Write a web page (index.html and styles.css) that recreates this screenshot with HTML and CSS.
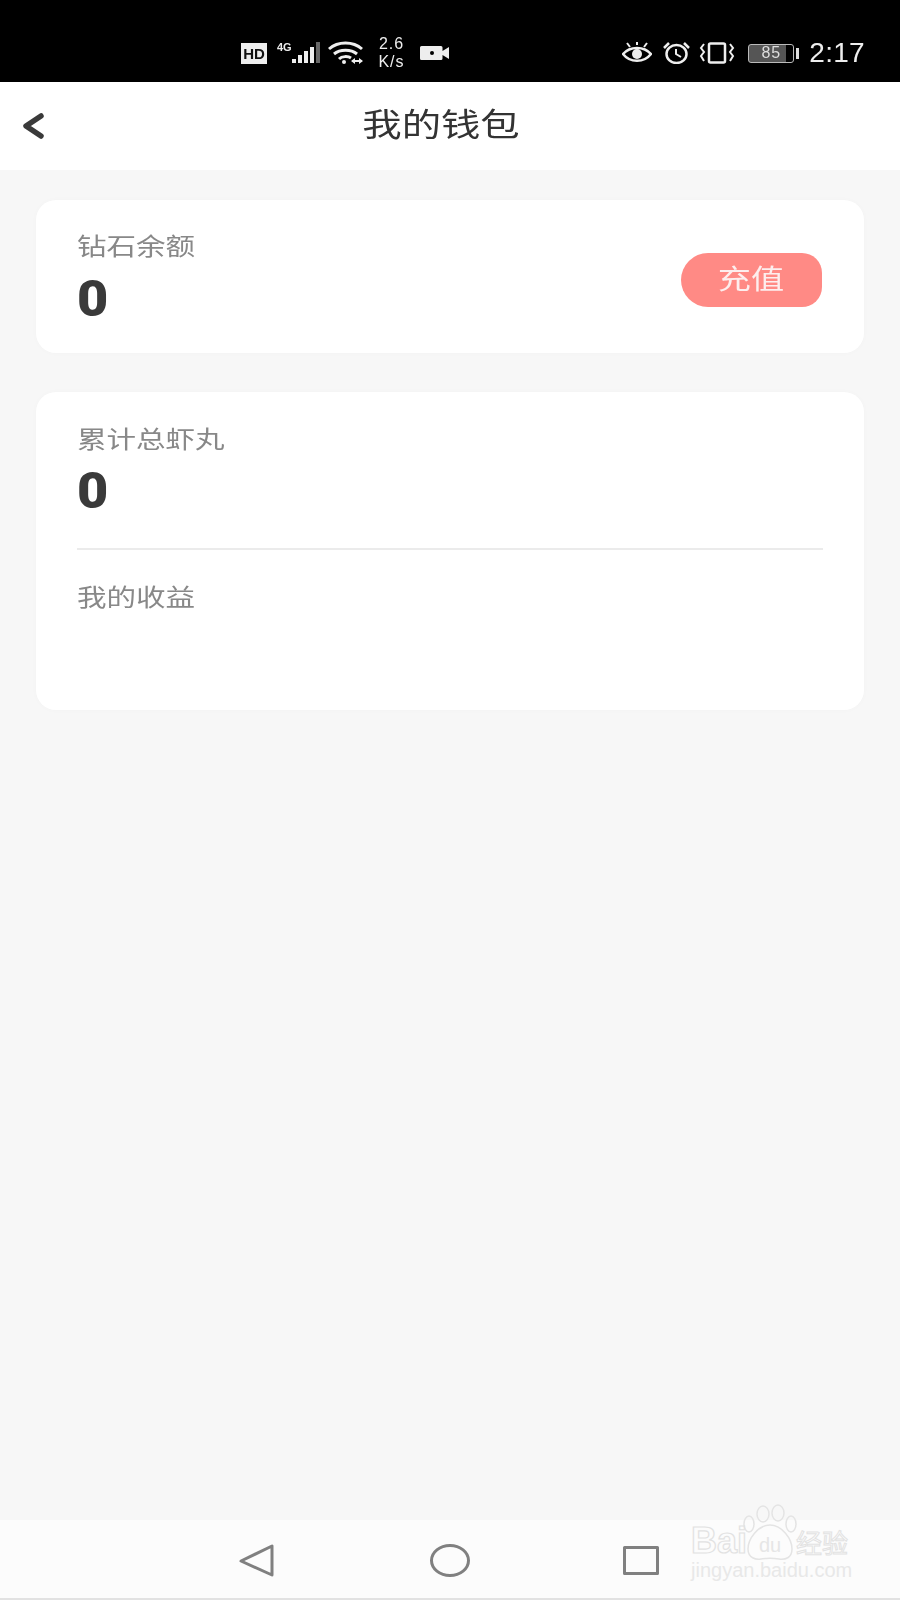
FILE: index.html
```html
<!DOCTYPE html>
<html lang="zh-CN">
<head>
    <meta charset="UTF-8">
    <meta name="viewport" content="width=device-width, initial-scale=1.0">
    <title>我的钱包</title>
    <link rel="stylesheet" href="styles.css">
</head>
<body>
    <div class="status-bar">
        <div class="status-group status-left">
            <span class="hd-badge">HD</span>
            <svg class="icon-signal" width="45" height="22" viewBox="0 0 45 22">
                <text x="0" y="9" class="net-label">4G</text>
                <rect x="15" y="17" width="4" height="4" fill="#eee"/>
                <rect x="21" y="13" width="4" height="8" fill="#eee"/>
                <rect x="27" y="9" width="4" height="12" fill="#eee"/>
                <rect x="33" y="5" width="4" height="16" fill="#eee"/>
                <rect x="39" y="0" width="4" height="21" fill="#666"/>
            </svg>
            <svg class="icon-wifi" width="35" height="24" viewBox="0 0 35 24" fill="none" stroke="#eee" stroke-width="3">
                <path d="M1 8C10 0 25 0 34 8"/>
                <path d="M6 13C12 8 23 8 29 13"/>
                <path d="M11 18C14 15 20 15 23 17"/>
                <circle cx="16" cy="21" r="2" fill="#eee" stroke="none"/>
                <path d="M24 20h10" stroke-width="2"/>
                <path d="M27 17v6l-4-3zM31 17v6l4-3z" fill="#eee" stroke="none"/>
            </svg>
            <div class="net-speed">
                <span>2.6</span>
                <span>K/s</span>
            </div>
            <svg class="icon-camera" width="29" height="14" viewBox="0 0 29 14">
                <path d="M1.500 0H21a1.500 1.500 0 0 1 1.500 1.500V5L29 1v12l-6.500-4v3.500A1.500 1.500 0 0 1 21 14H1.500A1.500 1.500 0 0 1 0 12.500v-11A1.500 1.500 0 0 1 1.500 0z" fill="#eee"/>
                <circle cx="12" cy="7" r="2" fill="#000"/>
            </svg>
        </div>
        <div class="status-group status-right">
            <svg class="icon-eye" width="30" height="22" viewBox="0 0 30 22" fill="none" stroke="#eee" stroke-width="2.500">
                <path d="M1 12C8 4 22 4 29 12C22 21 8 21 1 12z"/>
                <circle cx="15" cy="12" r="5" fill="#eee" stroke="none"/>
                <path d="M8 5L5 1M22 5l3-4M15 3V0" stroke-width="2"/>
            </svg>
            <svg class="icon-alarm" width="29" height="22" viewBox="0 0 29 22" fill="none" stroke="#eee" stroke-width="2.500">
                <ellipse cx="14.500" cy="12" rx="10" ry="9"/>
                <path d="M14 7v5l5 3" stroke-width="2"/>
                <path d="M2 6L7 1M27 6L22 1"/>
            </svg>
            <svg class="icon-vibrate" width="36" height="22" viewBox="0 0 36 22" fill="none" stroke="#eee" stroke-width="2.500">
                <rect x="10" y="1.500" width="16" height="19" rx="1.500"/>
                <path d="M5 2L2 6l3 4-3 4 3 5M31 2l3 4-3 4 3 4-3 5" stroke-width="2"/>
            </svg>
            <div class="battery">
                <div class="battery-body">85</div>
                <div class="battery-nub"></div>
            </div>
            <span class="clock">2:17</span>
        </div>
    </div>

    <div class="top-bar">
        <svg class="back-icon" width="21" height="26" viewBox="0 0 21 26" fill="none" stroke="#3a3a3a" stroke-width="5.500" stroke-linecap="round" stroke-linejoin="round">
            <path d="M18 3L3 13l15 10"/>
        </svg>
        <div class="page-title"><span class="wide">我的钱包</span></div>
    </div>

    <div class="content">
        <div class="card balance-card">
            <div>
                <div class="stat-label"><span class="wide">钻石余额</span></div>
                <div class="stat-value"><span class="digit">0</span></div>
            </div>
            <div class="recharge-btn"><span class="wide">充值</span></div>
        </div>

        <div class="card total-card">
            <div class="stat-label"><span class="wide">累计总虾丸</span></div>
            <div class="stat-value"><span class="digit">0</span></div>
            <div class="divider"></div>
            <div class="stat-label"><span class="wide">我的收益</span></div>
        </div>
    </div>

    <div class="nav-bar">
        <svg class="nav-back" width="35" height="33" viewBox="0 0 35 33" fill="none" stroke="#808080" stroke-width="3" stroke-linejoin="round">
            <path d="M33 2V31L2 17z"/>
        </svg>
        <svg class="nav-home" width="40" height="33" viewBox="0 0 40 33" fill="none" stroke="#808080" stroke-width="3">
            <ellipse cx="20" cy="16.500" rx="18.500" ry="15"/>
        </svg>
        <svg class="nav-recent" width="36" height="29" viewBox="0 0 36 29" fill="none" stroke="#808080" stroke-width="3" stroke-linejoin="round">
            <rect x="1.500" y="1.500" width="33" height="26"/>
        </svg>
        <svg class="watermark" width="162" height="80" viewBox="0 0 162 80">
            <g fill="none" stroke="#e4e4e4" stroke-width="1.500">
                <ellipse cx="72" cy="11" rx="6" ry="8"/>
                <ellipse cx="87" cy="10" rx="6" ry="8"/>
                <ellipse cx="58" cy="21" rx="5" ry="8"/>
                <ellipse cx="100" cy="21" rx="5" ry="8"/>
                <path d="M79 22c-12 0-22 14-22 24 0 9 8 11 13 10 6-1 12-1 18 0 6 1 13-1 13-10 0-10-10-24-22-24z"/>
            </g>
            <text x="0" y="50" class="wm-brand">Bai</text>
            <text x="68" y="49" class="wm-du">du</text>
            <text x="105" y="50" class="wm-cn">经验</text>
            <text x="0" y="74" class="wm-url">jingyan.baidu.com</text>
        </svg>
    </div>
</body>
</html>
```

FILE: styles.css
```css
* {
    margin: 0;
    padding: 0;
    box-sizing: border-box;
}

body {
    display: flex;
    flex-direction: column;
    width: 900px;
    height: 1600px;
    overflow: hidden;
    background: #f7f7f7;
    font-family: "Noto Sans CJK SC", "Liberation Sans", sans-serif;
}

/* the whole screenshot is stretched sideways, text follows it */
.wide {
    display: inline-block;
    transform: scaleX(1.23);
    transform-origin: left center;
    white-space: nowrap;
    filter: blur(0.4px);
}

/* Status bar */
.status-bar {
    display: flex;
    justify-content: space-between;
    align-items: center;
    flex: none;
    height: 82px;
    padding: 24px 35px 0 241px;
    background: #000;
    color: #eee;
    font-family: "Liberation Sans", sans-serif;
    filter: blur(0.4px);
}

.status-group {
    display: flex;
    align-items: center;
}

.hd-badge {
    width: 26px;
    height: 21px;
    margin-right: 10px;
    background: #eee;
    color: #111;
    font-size: 15px;
    font-weight: bold;
    line-height: 21px;
    text-align: center;
}

.net-label {
    fill: #eee;
    font-size: 11px;
    font-weight: bold;
}

.icon-signal {
    margin-right: 6px;
}

.net-speed {
    display: flex;
    flex-direction: column;
    align-items: center;
    width: 31px;
    margin: 0 13px;
    font-size: 16px;
    line-height: 18px;
    letter-spacing: 1px;
}

.icon-eye {
    margin-right: 10px;
}

.icon-alarm {
    margin-right: 8px;
}

.icon-vibrate {
    margin-right: 13px;
}

.battery {
    display: flex;
    align-items: center;
    gap: 2px;
    margin-right: 10px;
}

.battery-body {
    width: 46px;
    height: 19px;
    border: 1.5px solid #bbb;
    border-radius: 3px;
    background: linear-gradient(to right, #555 85%, #000 85%);
    color: #ddd;
    font-size: 16px;
    line-height: 16px;
    letter-spacing: 1px;
    text-align: center;
}

.battery-nub {
    width: 3px;
    height: 11px;
    background: #ddd;
}

.clock {
    font-size: 28px;
    line-height: 28px;
    letter-spacing: 0.3px;
}

/* Title row */
.top-bar {
    display: flex;
    align-items: center;
    flex: none;
    height: 88px;
    padding: 0 62px 0 23px;
    background: #fff;
}

.page-title {
    flex: 1;
    margin-bottom: 8px;
    color: #333;
    font-size: 32px;
    line-height: 40px;
    text-align: center;
}

.page-title .wide {
    transform-origin: center;
}

/* Cards */
.content {
    display: flex;
    flex: 1;
    flex-direction: column;
    gap: 39px;
    padding: 30px 36px;
}

.card {
    padding: 30px 41px 26px;
    border-radius: 20px;
    background: #fff;
    box-shadow: 0 0 6px rgba(0, 0, 0, 0.02);
}

.balance-card {
    display: flex;
    justify-content: space-between;
    align-items: center;
}

.balance-card .stat-value {
    margin-top: 11px;
}

.total-card {
    height: 318px;
    padding-top: 31px;
}

.stat-label {
    color: #888;
    font-size: 24px;
    line-height: 30px;
}

.stat-value {
    margin-top: 10px;
    color: #3a3a3a;
    font-family: "Roboto", "Liberation Sans", sans-serif;
    font-size: 50px;
    font-weight: 900;
    line-height: 56px;
}

.digit {
    display: inline-block;
    transform: scaleX(1.08);
    transform-origin: left center;
    filter: blur(0.4px);
}

.recharge-btn {
    width: 141px;
    height: 54px;
    margin: 2px 1.5px 0 0;
    border-radius: 27px 20px 20px 27px;
    background: #ff8a85;
    color: #fdeeee;
    font-size: 27px;
    line-height: 50px;
    text-align: center;
}

.recharge-btn .wide {
    transform-origin: center;
}

.divider {
    height: 2px;
    margin: 29px 0 31px;
    background: #ebebeb;
}

/* Navigation bar */
.nav-bar {
    position: relative;
    display: flex;
    align-items: center;
    flex: none;
    height: 80px;
    padding: 2px 0 0 239px;
    border-bottom: 2px solid #e2e2e2;
    background: #fcfcfc;
}

.nav-back {
    margin-right: 156px;
}

.nav-home {
    margin-right: 153px;
}

.watermark {
    position: absolute;
    top: -17px;
    left: 691px;
    overflow: visible;
}

.wm-brand {
    fill: none;
    stroke: #e2e2e2;
    stroke-width: 1.2;
    font-family: "Liberation Sans", sans-serif;
    font-size: 36px;
    font-weight: bold;
}

.wm-du {
    fill: #e6e6e6;
    font-family: "Liberation Sans", sans-serif;
    font-size: 20px;
}

.wm-cn {
    fill: none;
    stroke: #e2e2e2;
    font-size: 26px;
}

.wm-url {
    fill: #e8e8e8;
    font-family: "Liberation Sans", sans-serif;
    font-size: 20px;
}
```
